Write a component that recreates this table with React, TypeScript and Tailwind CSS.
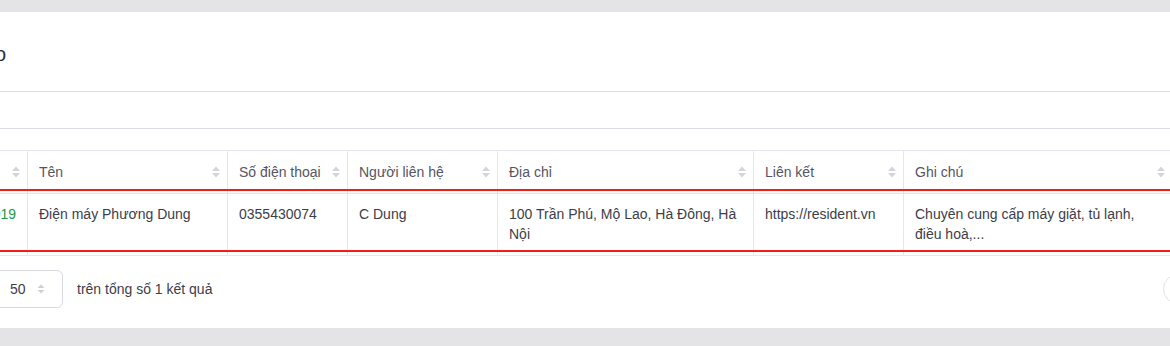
import React from "react";

const font = { fontFamily: '"Liberation Sans", Arial, sans-serif' };

function SortIcon() {
    return (
        <svg width="10" height="12" viewBox="0 0 10 12" className="shrink-0">
            <path d="M5 0.5 L9 5 L1 5 Z" fill="#d4d4dc" />
            <path d="M5 11.5 L9 7 L1 7 Z" fill="#d4d4dc" />
        </svg>
    );
}

const columns = [
    { title: "Mã", width: "w-[128px]" },
    { title: "Tên", width: "w-[200px]" },
    { title: "Số điện thoại", width: "w-[120px]" },
    { title: "Người liên hệ", width: "w-[150px]" },
    { title: "Địa chỉ", width: "w-[256px]" },
    { title: "Liên kết", width: "w-[150px]" },
    { title: "Ghi chú", width: "flex-1" },
];

const row = [
    "NCC0000019",
    "Điện máy Phương Dung",
    "0355430074",
    "C Dung",
    "100 Trần Phú, Mộ Lao, Hà Đông, Hà Nội",
    "https://resident.vn",
    "Chuyên cung cấp máy giặt, tủ lạnh, điều hoà,...",
];

export default function App() {
    return (
        <div className="w-[1170px] h-[346px] overflow-hidden bg-[#e4e4e6] pt-3" style={font}>
            <div className="bg-white h-[316px] w-[1300px] -ml-[100px]">
                {/* title */}
                <div className="h-[80px] border-b border-[#dcdce4] flex items-center">
                    <div className="w-[106px] text-right whitespace-nowrap text-[20px] text-[#2b2a3f] pt-1 overflow-hidden flex justify-end">
                        <span>Nhà cung cấp theo kho</span>
                    </div>
                </div>

                {/* toolbar */}
                <div className="h-[37px] border-b border-[#dcdce4]" />

                {/* table */}
                <div className="mt-[21px] pr-[27px] relative text-[14px]">
                    <div className="flex border-t border-b border-[#e6e6ee] h-[44px]">
                        {columns.map((c, i) => (
                            <div
                                key={i}
                                className={`${c.width} flex items-center justify-between pl-[11px] pr-[6px] border-r border-[#e6e6ee] text-[#555562] whitespace-nowrap`}
                            >
                                <span>{c.title}</span>
                                <SortIcon />
                            </div>
                        ))}
                    </div>
                    <div className="flex border-b border-[#e6e6ee] h-[62px]">
                        {columns.map((c, i) => (
                            <div
                                key={i}
                                className={`${c.width} pl-[11px] pr-3 pt-[10px] leading-5 border-r border-[#e6e6ee] ${i === 0 ? "text-right text-[#1a9a4a] pr-[11px]" : "text-[#3d3d48]"}`}
                            >
                                {row[i]}
                            </div>
                        ))}
                    </div>
                    <div className="absolute left-0 right-0 top-[39px] h-[2px] bg-[#f01e14]" />
                    <div className="absolute left-0 right-0 top-[100px] h-[2px] bg-[#f01e14]" />
                </div>

                {/* pagination */}
                <div className="mt-[14px] flex items-center h-[38px]">
                    <div className="ml-[90px] w-[73px] h-[38px] border border-[#d9d9e0] rounded-md flex items-center pl-[19px] gap-[8px] text-[14px] text-[#3d3d48]">
                        <span>50</span>
                        <svg width="10" height="10" viewBox="0 0 10 10" className="ml-[2px]">
                            <path d="M5 0.5 L8.5 4 L1.5 4 Z" fill="#cfcfd6" />
                            <path d="M5 9.5 L8.5 6 L1.5 6 Z" fill="#cfcfd6" />
                        </svg>
                    </div>
                    <span className="ml-[14px] text-[14px] text-[#3d3d48]">trên tổng số 1 kết quả</span>
                    <div className="ml-[951px] w-[30px] h-[30px] rounded-full border border-[#e2e2e8] flex items-center justify-center text-[#b0b0b8] text-sm">
                        ‹
                    </div>
                </div>
            </div>
        </div>
    );
}
